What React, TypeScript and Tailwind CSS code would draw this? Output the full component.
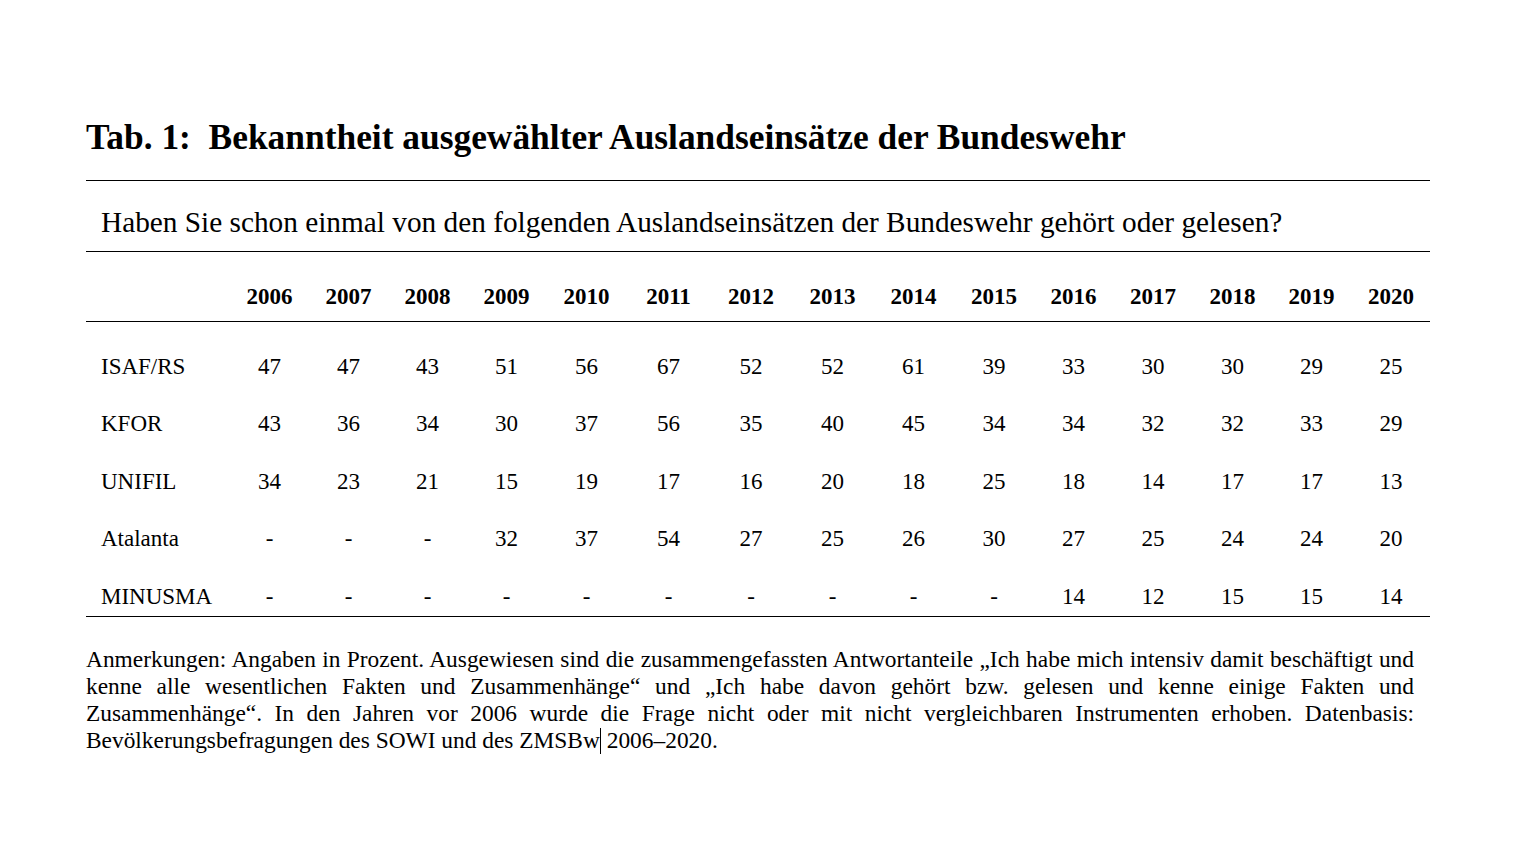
import React from "react";

type Row = {
  label: string;
  values: string[];
};

const years = [
  "2006", "2007", "2008", "2009", "2010", "2011", "2012", "2013",
  "2014", "2015", "2016", "2017", "2018", "2019", "2020",
];

const rows: Row[] = [
  { label: "ISAF/RS", values: ["47", "47", "43", "51", "56", "67", "52", "52", "61", "39", "33", "30", "30", "29", "25"] },
  { label: "KFOR", values: ["43", "36", "34", "30", "37", "56", "35", "40", "45", "34", "34", "32", "32", "33", "29"] },
  { label: "UNIFIL", values: ["34", "23", "21", "15", "19", "17", "16", "20", "18", "25", "18", "14", "17", "17", "13"] },
  { label: "Atalanta", values: ["-", "-", "-", "32", "37", "54", "27", "25", "26", "30", "27", "25", "24", "24", "20"] },
  { label: "MINUSMA", values: ["-", "-", "-", "-", "-", "-", "-", "-", "-", "-", "14", "12", "15", "15", "14"] },
];

// note lines as set in the reference (justified except the last)
const noteLines = [
  "Anmerkungen: Angaben in Prozent. Ausgewiesen sind die zusammengefassten Antwortanteile „Ich habe mich intensiv damit beschäftigt und",
  "kenne alle wesentlichen Fakten und Zusammenhänge“ und „Ich habe davon gehört bzw. gelesen und kenne einige Fakten und",
  "Zusammenhänge“. In den Jahren vor 2006 wurde die Frage nicht oder mit nicht vergleichbaren Instrumenten erhoben. Datenbasis:",
];

const cols =
  "grid grid-cols-[144px_79px_79px_79px_79px_81px_83px_82px_81px_81px_80px_79px_80px_79px_79px_80px]";

const App: React.FC = () => {
  return (
    <div className="min-h-screen w-full bg-white text-black font-['Liberation_Serif','Times_New_Roman',serif]">
      <div className="pl-[86px] pr-[103px] pt-[112px]">
        <h1 className="text-[35.4px] font-bold leading-[50px] whitespace-pre">
          {"Tab. 1:  Bekanntheit ausgewählter Auslandseinsätze der Bundeswehr"}
        </h1>

        <div className="mt-[18px] border-t border-black">
          <div className="h-[70px] pt-[14px] flex items-center pl-[15px] text-[29.3px] whitespace-nowrap">
            Haben Sie schon einmal von den folgenden Auslandseinsätzen der Bundeswehr gehört oder gelesen?
          </div>

          <div className="border-t border-black">
            <div className={`${cols} h-[69px] pt-[21px] items-center text-[23px] font-bold`}>
              <div />
              {years.map((y) => (
                <div key={y} className="text-center">
                  {y}
                </div>
              ))}
            </div>
          </div>

          <div className="border-t border-b border-black pt-[26px] flex flex-col gap-[19.5px]">
            {rows.map((row) => (
              <div key={row.label} className={`${cols} h-[38px] items-center text-[23px]`}>
                <div className="pl-[15px]">{row.label}</div>
                {row.values.map((v, i) => (
                  <div key={i} className="text-center">
                    {v}
                  </div>
                ))}
              </div>
            ))}
          </div>
        </div>

        <div className="mt-[29px] w-[1328px] text-[23.4px] leading-[27px]">
          {noteLines.map((line, i) => (
            <div key={i} className="whitespace-nowrap text-justify [text-align-last:justify]">
              {line}
            </div>
          ))}
          <div className="whitespace-nowrap">
            Bevölkerungsbefragungen des SOWI und des ZMSBw
            <span className="inline-block w-px h-[26px] bg-black align-[-6px]" /> 2006–2020.
          </div>
        </div>
      </div>
    </div>
  );
};

export default App;
